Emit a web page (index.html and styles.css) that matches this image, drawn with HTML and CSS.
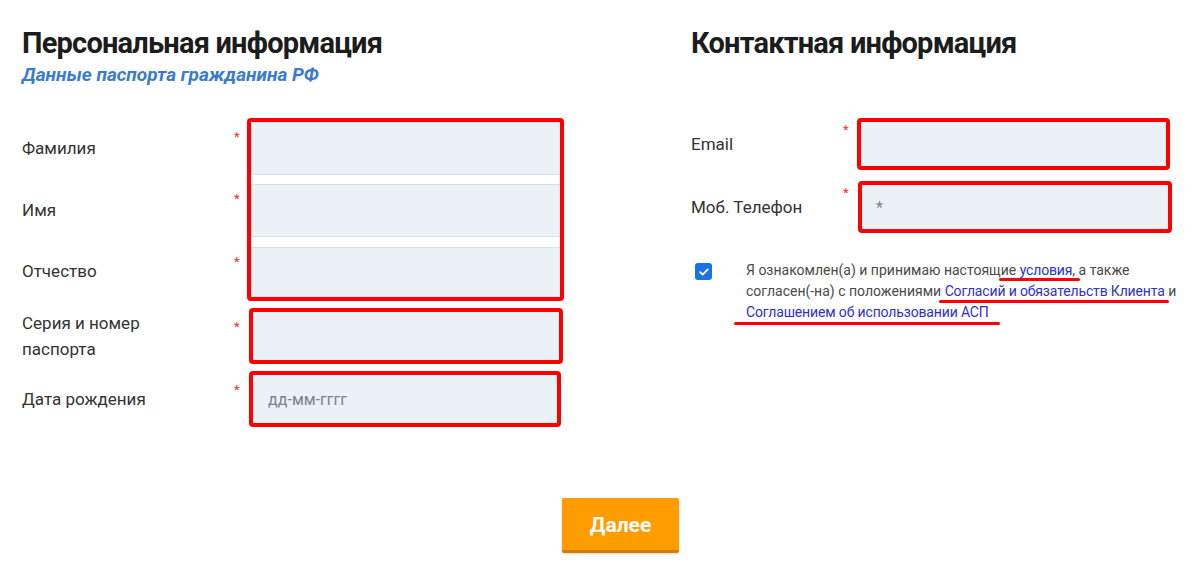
FILE: index.html
```html
<!DOCTYPE html>
<html lang="ru">
<head>
<meta charset="utf-8">
<title>Анкета</title>
<link rel="stylesheet" href="styles.css">
</head>
<body>
<main class="page">
  <div class="columns">
    <section class="col col-left">
      <h1 class="title">Персональная информация</h1>
      <p class="subtitle">Данные паспорта гражданина РФ</p>

      <div class="form">
        <div class="group">
          <div class="row row-g1">
            <label class="label">Фамилия</label>
            <span class="star">*</span>
            <input class="field field-plain" type="text">
          </div>
          <div class="row row-g2">
            <label class="label">Имя</label>
            <span class="star">*</span>
            <input class="field field-plain" type="text">
          </div>
          <div class="row row-g3">
            <label class="label">Отчество</label>
            <span class="star">*</span>
            <input class="field field-plain field-last" type="text">
          </div>
        </div>

        <div class="row row-single row-passport">
          <label class="label label-two">Серия и номер<br>паспорта</label>
          <span class="star">*</span>
          <input class="field field-red w314" type="text">
        </div>
        <div class="row row-single row-date">
          <label class="label">Дата рождения</label>
          <span class="star">*</span>
          <input class="field field-red w312" type="text" placeholder="дд-мм-гггг">
        </div>
      </div>
    </section>

    <section class="col col-right">
      <h1 class="title">Контактная информация</h1>

      <div class="form form-right">
        <div class="row row-r row-email">
          <label class="label label-r">Email</label>
          <span class="star star-r">*</span>
          <input class="field field-red field-r w313" type="text">
        </div>
        <div class="row row-r row-phone">
          <label class="label label-r">Моб. Телефон</label>
          <span class="star star-r">*</span>
          <input class="field field-red field-r w314 phone" type="text" placeholder="*">
        </div>

        <div class="agree">
          <span class="checkbox" aria-checked="true" role="checkbox">
            <svg viewBox="0 0 16 16" width="12" height="12"><path d="M3 8.3 L6.4 11.5 L13 4.6" fill="none" stroke="#fff" stroke-width="2.4" stroke-linecap="round" stroke-linejoin="round"/></svg>
          </span>
          <p class="agree-text">Я ознакомлен(а) и принимаю настоящи<span class="mark m1">е <a href="#" class="link">условия</a>, а</span> также<br>согласен(-на) с положениями <span class="mark m2"><a href="#" class="link">Согласий и обязательств Клиента</a></span> и<br><span class="mark m3"><a href="#" class="link">Соглашением об использовании АСП</a></span></p>
        </div>
      </div>
    </section>
  </div>

  <div class="actions">
    <button class="btn" type="button">Далее</button>
  </div>
</main>
</body>
</html>
```

FILE: styles.css
```css
*, *::before, *::after { box-sizing: border-box; }

html, body {
  margin: 0;
  padding: 0;
  background: #ffffff;
}

body {
  font-family: Roboto, "Noto Sans", "Liberation Sans", sans-serif;
  color: #333333;
  width: 1195px;
  height: 565px;
  overflow: hidden;
}

.page {
  padding: 25px 0 0 22px;
}

.columns {
  display: flex;
  gap: 127px;
}

.col-left { width: 542px; }
.col-right { width: 483px; }

.title {
  margin: 0;
  font-size: 29px;
  line-height: 36px;
  font-weight: 700;
  letter-spacing: -0.8px;
  color: #1c1c1c;
  white-space: nowrap;
}

.subtitle {
  margin: 3px 0 0;
  font-size: 19px;
  line-height: 22px;
  font-weight: 700;
  font-style: italic;
  color: #3a7bd0;
}

.form { margin-top: 32px; }

.row {
  display: flex;
  align-items: center;
}

.label {
  flex: 0 0 208px;
  font-size: 17px;
  line-height: 26px;
  color: #333333;
}

.star {
  flex: 0 0 19px;
  align-self: flex-start;
  padding-left: 4px;
  margin-top: 6px;
  font-size: 13px;
  line-height: 14px;
  color: #ff2a2a;
}

.field {
  font-family: inherit;
  font-size: 16px;
  color: #333;
  background: #ecf0f7;
  outline: none;
  margin: 0;
}

.field::placeholder { color: #7d838c; }

/* grouped fields inside the red annotation frame */
.group {
  position: relative;
  padding: 4px 0 4px;
  display: flex;
  flex-direction: column;
  gap: 9px;
}

.group::after {
  content: "";
  position: absolute;
  left: 225px;
  top: 0;
  bottom: 0;
  width: 317px;
  border: 4px solid #ff0000;
  border-radius: 4px;
  pointer-events: none;
}

.group .star { margin-top: 8px; }

.group .label { margin-top: -2px; }

.field-plain {
  width: 312px;
  height: 53px;
  border: 1px solid #d9e0ea;
  margin-left: 2px;
  padding: 0 14px;
}

.field-plain.field-last { height: 50px; }

.row-g3 { margin-top: 1px; }

/* single fields with red frame */
.field-red {
  height: 56px;
  border: 4px solid #ff0000;
  border-radius: 4px;
  padding: 0 11px 0 15px;
}

.w312 { width: 312px; }
.w313 { width: 313px; }
.w314 { width: 314px; }

.row-single { margin-top: 7px; }
.row-single .star { margin-top: 12px; }

/* right column */
.form-right { margin-top: 57px; }

.label-r { flex: 0 0 150px; }

.star-r {
  flex: 0 0 16px;
  padding-left: 2px;
  margin-top: 5px;
}

.field-r { height: 52px; padding: 0 12px 0 14px; }

.row-phone { margin-top: 11px; }
.phone { margin-left: 1px; }

.agree {
  display: flex;
  align-items: flex-start;
  margin-top: 27px;
}

.checkbox {
  flex: 0 0 17px;
  width: 17px;
  height: 17px;
  margin: 3px 0 0 4px;
  background: #1b72e6;
  border-radius: 3px;
  display: flex;
  align-items: center;
  justify-content: center;
}

.agree-text {
  margin: 0 0 0 34px;
  font-size: 14px;
  line-height: 21px;
  color: #4a4a4a;
  white-space: nowrap;
}

.link {
  color: #2f2fcf;
  text-decoration: none;
  letter-spacing: -0.15px;
}

.mark { position: relative; }

.mark::after {
  content: "";
  position: absolute;
  height: 3px;
  background: #ff0000;
  border-radius: 2px;
  bottom: -3px;
}

.m1::after { left: -10px; right: 6px; }
.m2::after { left: -6px; right: -4px; bottom: -4px; }
.m3::after { left: -12px; right: -11px; bottom: -5px; }

/* action */
.actions {
  margin-top: 71px;
  padding-left: 540px;
}

.btn {
  width: 117px;
  height: 55px;
  border: none;
  border-bottom: 3px solid #d77a00;
  border-radius: 2px;
  background: #ff9c00;
  color: #ffffff;
  font-family: inherit;
  font-size: 21px;
  font-weight: 700;
  box-shadow: 0 1px 3px rgba(0, 0, 0, 0.18);
  padding: 2px 0 0;
}
```
